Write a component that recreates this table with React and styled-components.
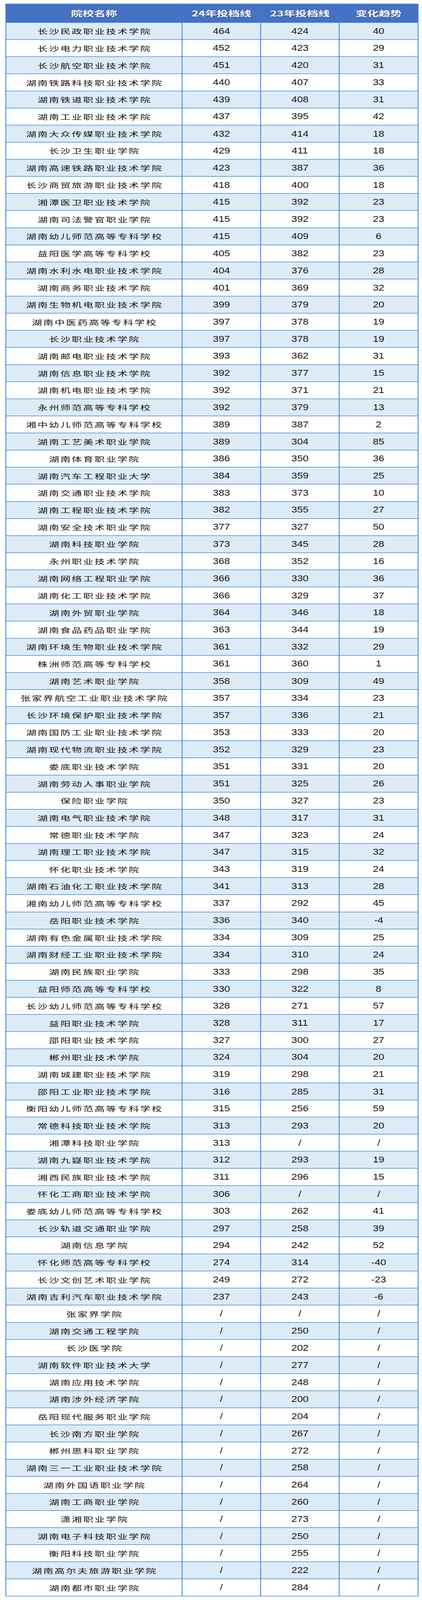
import React, { useEffect, useState } from 'react';
import styled, { createGlobalStyle } from 'styled-components';

const GlobalStyle = createGlobalStyle`
  html, body {
    margin: 0;
    padding: 0;
    background: #ffffff;
  }
  body {
    font-family: "Noto Sans CJK SC", "Noto Sans", sans-serif;
  }
`;

const rows = [
  ['长沙民政职业技术学院', '464', '424', '40'],
  ['长沙电力职业技术学院', '452', '423', '29'],
  ['长沙航空职业技术学院', '451', '420', '31'],
  ['湖南铁路科技职业技术学院', '440', '407', '33'],
  ['湖南铁道职业技术学院', '439', '408', '31'],
  ['湖南工业职业技术学院', '437', '395', '42'],
  ['湖南大众传媒职业技术学院', '432', '414', '18'],
  ['长沙卫生职业学院', '429', '411', '18'],
  ['湖南高速铁路职业技术学院', '423', '387', '36'],
  ['长沙商贸旅游职业技术学院', '418', '400', '18'],
  ['湘潭医卫职业技术学院', '415', '392', '23'],
  ['湖南司法警官职业学院', '415', '392', '23'],
  ['湖南幼儿师范高等专科学校', '415', '409', '6'],
  ['益阳医学高等专科学校', '405', '382', '23'],
  ['湖南水利水电职业技术学院', '404', '376', '28'],
  ['湖南商务职业技术学院', '401', '369', '32'],
  ['湖南生物机电职业技术学院', '399', '379', '20'],
  ['湖南中医药高等专科学校', '397', '378', '19'],
  ['长沙职业技术学院', '397', '378', '19'],
  ['湖南邮电职业技术学院', '393', '362', '31'],
  ['湖南信息职业技术学院', '392', '377', '15'],
  ['湖南机电职业技术学院', '392', '371', '21'],
  ['永州师范高等专科学校', '392', '379', '13'],
  ['湘中幼儿师范高等专科学校', '389', '387', '2'],
  ['湖南工艺美术职业学院', '389', '304', '85'],
  ['湖南体育职业学院', '386', '350', '36'],
  ['湖南汽车工程职业大学', '384', '359', '25'],
  ['湖南交通职业技术学院', '383', '373', '10'],
  ['湖南工程职业技术学院', '382', '355', '27'],
  ['湖南安全技术职业学院', '377', '327', '50'],
  ['湖南科技职业学院', '373', '345', '28'],
  ['永州职业技术学院', '368', '352', '16'],
  ['湖南网络工程职业学院', '366', '330', '36'],
  ['湖南化工职业技术学院', '366', '329', '37'],
  ['湖南外贸职业学院', '364', '346', '18'],
  ['湖南食品药品职业学院', '363', '344', '19'],
  ['湖南环境生物职业技术学院', '361', '332', '29'],
  ['株洲师范高等专科学校', '361', '360', '1'],
  ['湖南艺术职业学院', '358', '309', '49'],
  ['张家界航空工业职业技术学院', '357', '334', '23'],
  ['长沙环境保护职业技术学院', '357', '336', '21'],
  ['湖南国防工业职业技术学院', '353', '333', '20'],
  ['湖南现代物流职业技术学院', '352', '329', '23'],
  ['娄底职业技术学院', '351', '331', '20'],
  ['湖南劳动人事职业学院', '351', '325', '26'],
  ['保险职业学院', '350', '327', '23'],
  ['湖南电气职业技术学院', '348', '317', '31'],
  ['常德职业技术学院', '347', '323', '24'],
  ['湖南理工职业技术学院', '347', '315', '32'],
  ['怀化职业技术学院', '343', '319', '24'],
  ['湖南石油化工职业技术学院', '341', '313', '28'],
  ['湘南幼儿师范高等专科学校', '337', '292', '45'],
  ['岳阳职业技术学院', '336', '340', '-4'],
  ['湖南有色金属职业技术学院', '334', '309', '25'],
  ['湖南财经工业职业技术学院', '334', '310', '24'],
  ['湖南民族职业学院', '333', '298', '35'],
  ['益阳师范高等专科学校', '330', '322', '8'],
  ['长沙幼儿师范高等专科学校', '328', '271', '57'],
  ['益阳职业技术学院', '328', '311', '17'],
  ['邵阳职业技术学院', '327', '300', '27'],
  ['郴州职业技术学院', '324', '304', '20'],
  ['湖南城建职业技术学院', '319', '298', '21'],
  ['邵阳工业职业技术学院', '316', '285', '31'],
  ['衡阳幼儿师范高等专科学校', '315', '256', '59'],
  ['常德科技职业技术学院', '313', '293', '20'],
  ['湘潭科技职业学院', '313', '/', '/'],
  ['湖南九嶷职业技术学院', '312', '293', '19'],
  ['湘西民族职业技术学院', '311', '296', '15'],
  ['怀化工商职业技术学院', '306', '/', '/'],
  ['娄底幼儿师范高等专科学校', '303', '262', '41'],
  ['长沙轨道交通职业学院', '297', '258', '39'],
  ['湖南信息学院', '294', '242', '52'],
  ['怀化师范高等专科学校', '274', '314', '-40'],
  ['长沙文创艺术职业学院', '249', '272', '-23'],
  ['湖南吉利汽车职业技术学院', '237', '243', '-6'],
  ['张家界学院', '/', '/', '/'],
  ['湖南交通工程学院', '/', '250', '/'],
  ['长沙医学院', '/', '202', '/'],
  ['湖南软件职业技术大学', '/', '277', '/'],
  ['湖南应用技术学院', '/', '248', '/'],
  ['湖南涉外经济学院', '/', '200', '/'],
  ['岳阳现代服务职业学院', '/', '204', '/'],
  ['长沙南方职业学院', '/', '267', '/'],
  ['郴州思科职业学院', '/', '272', '/'],
  ['湖南三一工业职业技术学院', '/', '258', '/'],
  ['湖南外国语职业学院', '/', '264', '/'],
  ['湖南工商职业学院', '/', '260', '/'],
  ['潇湘职业学院', '/', '273', '/'],
  ['湖南电子科技职业学院', '/', '250', '/'],
  ['衡阳科技职业学院', '/', '255', '/'],
  ['湖南高尔夫旅游职业学院', '/', '222', '/'],
  ['湖南都市职业学院', '/', '284', '/'],
];

const DESIGN_W = 1080;
const DESIGN_H = 6186;
const LINE = '#2d7fd8';

/* Outer frame: clips the design to the real window size. */
const Frame = styled.div`
  width: 100%;
  overflow: hidden;
`;

/* Design canvas at 1080 x 6186; scaled to the window when it is smaller. */
const Page = styled.div`
  width: ${DESIGN_W}px;
  height: ${DESIGN_H}px;
  box-sizing: border-box;
  padding: 14px 9px 0 14px;
  transform-origin: 0 0;
  background: #ffffff;
`;

const Table = styled.div`
  width: 1057px;
  border-top: 2px solid ${LINE};
  border-left: 2px solid ${LINE};
  box-sizing: border-box;
`;

const Row = styled.div`
  display: grid;
  grid-template-columns: 451px 201px 201px 202px;
  height: ${(p) => (p.$head ? '72px' : '66.13px')};
  background: ${(p) => (p.$head ? '#4472c4' : p.$alt ? '#ddebf7' : '#ffffff')};
`;

const Cell = styled.div`
  display: flex;
  align-items: center;
  justify-content: center;
  box-sizing: border-box;
  border-right: 2px solid ${LINE};
  border-bottom: 2px solid ${LINE};
  color: #141414;
  white-space: nowrap;
  overflow: hidden;
`;

const HeadCell = styled(Cell)`
  color: #ffffff;
  font-family: "Noto Sans CJK SC", sans-serif;
  font-weight: 700;
  font-size: 30px;
  letter-spacing: -0.5px;
  text-shadow: 1px 1px 2px rgba(0, 0, 0, 0.45);
`;

const NameCell = styled(Cell)`
  font-family: "Noto Sans CJK SC", sans-serif;
  font-size: 26px;
  line-height: 1.2;
  letter-spacing: 3.2px;
  padding-left: 3px;
`;

const NumCell = styled(Cell)`
  font-family: "Liberation Sans", "Noto Sans CJK SC", sans-serif;
  font-size: 32px;
  line-height: 1.2;
`;

const Num = styled.span`
  display: inline-block;
  transform: scaleX(0.82);
`;

function readScale() {
  if (typeof window === 'undefined') return { sx: 1, sy: 1 };
  const w = window.innerWidth || DESIGN_W;
  const h = window.innerHeight || DESIGN_H;
  return {
    sx: Math.min(1, w / DESIGN_W),
    sy: Math.min(1, h / DESIGN_H),
  };
}

function useFrameScale() {
  const [scale, setScale] = useState(readScale);
  useEffect(() => {
    const onResize = () => setScale(readScale());
    window.addEventListener('resize', onResize);
    return () => window.removeEventListener('resize', onResize);
  }, []);
  return scale;
}

export default function App() {
  const { sx, sy } = useFrameScale();
  const scaled = sx !== 1 || sy !== 1;
  return (
    <>
      <GlobalStyle />
      <Frame style={{ height: `${Math.floor(DESIGN_H * sy)}px` }}>
        <Page style={scaled ? { transform: `scale(${sx}, ${sy})` } : undefined}>
          <Table>
            <Row $head>
              <HeadCell>院校名称</HeadCell>
              <HeadCell>24年投档线</HeadCell>
              <HeadCell>23年投档线</HeadCell>
              <HeadCell>变化趋势</HeadCell>
            </Row>
            {rows.map((r, i) => (
              <Row key={r[0]} $alt={i % 2 === 0}>
                <NameCell>{r[0]}</NameCell>
                <NumCell><Num>{r[1]}</Num></NumCell>
                <NumCell><Num>{r[2]}</Num></NumCell>
                <NumCell><Num>{r[3]}</Num></NumCell>
              </Row>
            ))}
          </Table>
        </Page>
      </Frame>
    </>
  );
}
